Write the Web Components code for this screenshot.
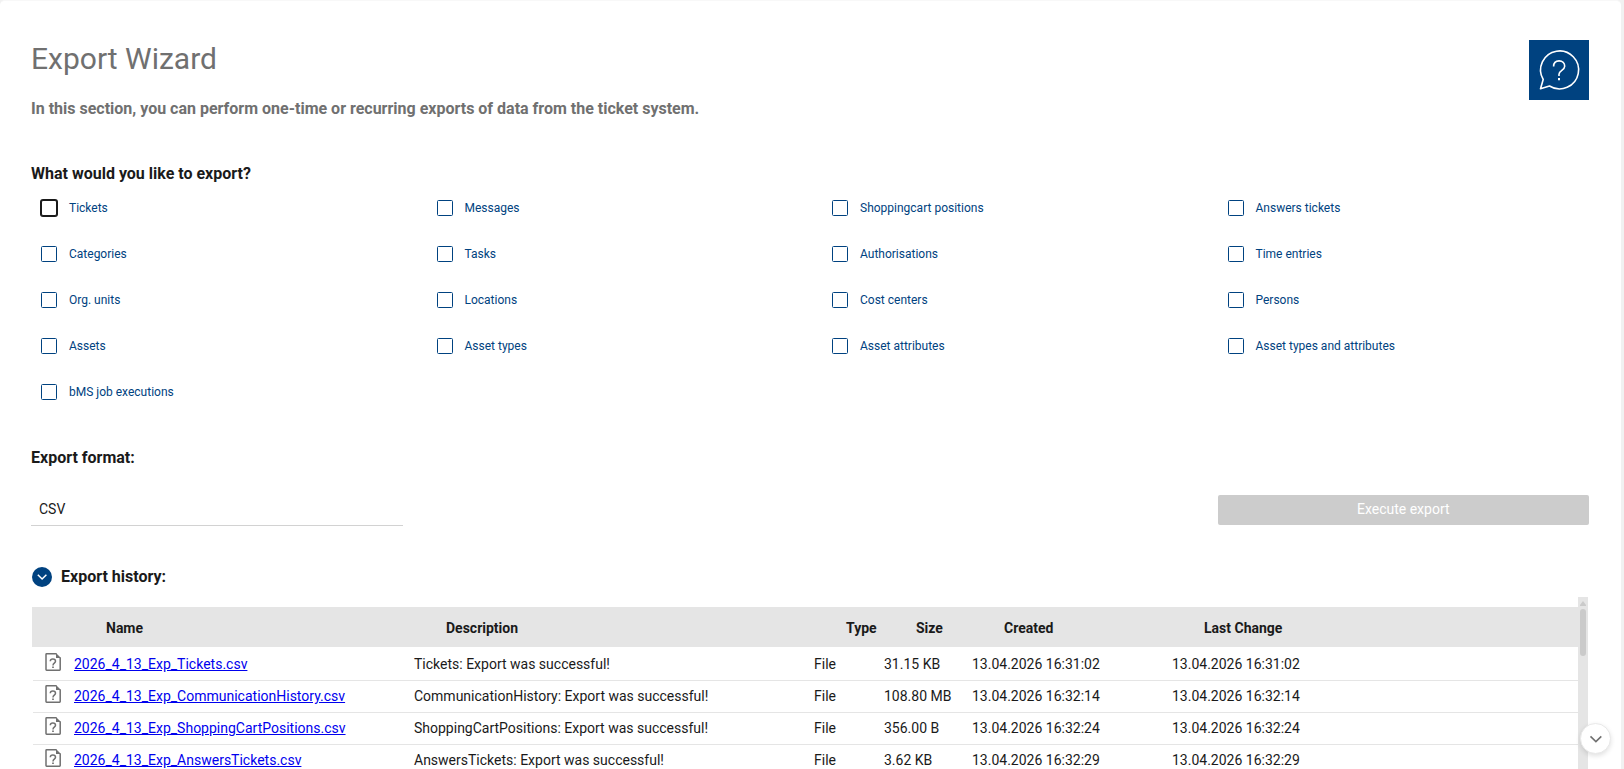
<!DOCTYPE html>
<html lang="en">
<head>
<meta charset="utf-8">
<title>Export Wizard</title>
<style>
html,body{margin:0;height:100%;overflow:hidden}
body{background:#f1f1f1;font-family:Roboto,"Liberation Sans",sans-serif;font-size:14px;color:#1a1a1a}
</style>
</head>
<body>
<export-wizard></export-wizard>
<script>
function define(name, html, init) {
  const template = document.createElement('template');
  template.innerHTML = html;
  customElements.define(name, class extends HTMLElement {
    constructor() {
      super();
      this.attachShadow({ mode: 'open' }).append(template.content.cloneNode(true));
      if (init) init(this.shadowRoot);
    }
  });
}

define('help-button', `
<style>
:host{display:block;width:60px;height:60px;background:#004280}
svg{display:block}
</style>
<svg width="60" height="60" viewBox="0 0 60 60" fill="none" stroke="#fff" stroke-width="1.6">
<path d="M14.2 39.5 A19 19 0 1 1 20.5 46 L11.5 48.7 Z" stroke-linejoin="round"/>
<path d="M24.6 26.6 C24.6 23 26.9 20.9 30.1 20.9 C33.4 20.9 35.7 23.1 35.7 26.3 C35.7 30.2 30 30.5 30 34.2 V36"/>
<path d="M30 38V40.2" stroke-width="2"/>
</svg>`);

define('section-title', `
<style>:host{display:block;font-size:16px;font-weight:700;line-height:24px;color:#1a1a1a}</style>
<slot></slot>`);

define('export-option', `
<style>
:host{display:flex;align-items:center;height:46px;padding-left:10px;gap:12px;font-size:12px;line-height:16px;color:#004280}
i{box-sizing:border-box;width:16px;height:16px;border:1px solid #004280;border-radius:1.5px;background:#fff}
:host([focused]) i{border:1px solid #1a1a1a;border-radius:2px;box-shadow:0 0 0 1px #1a1a1a}
</style>
<i></i><span><slot></slot></span>`);

define('format-select', `
<style>:host{display:block;box-sizing:border-box;height:31px;padding:4px 8px 6px;line-height:20px;border-bottom:1px solid #d2d2d2}</style>
<slot></slot>`);

define('action-button', `
<style>:host{display:block;height:30px;line-height:28px;text-align:center;border-radius:2px;background:#ccc;color:#fff}</style>
<slot></slot>`);

define('history-toggle', `
<style>:host{display:flex;align-items:center;gap:9px;padding-left:1px}svg{display:block}</style>
<svg width="20" height="20" viewBox="0 0 20 20"><circle cx="10" cy="10" r="10" fill="#004280"/><path d="M5.8 7.8 10.1 12l4.3-4.2" fill="none" stroke="#fff" stroke-width="1.5"/></svg>
<section-title><slot></slot></section-title>`);

define('file-icon', `
<style>:host{display:block;width:16px;height:18px}svg{display:block}</style>
<svg width="16" height="18" viewBox="0 0 16 18" fill="none" stroke="#707070">
<path d="M11.5 .8H1.6Q1 .8 1 1.4V16.6Q1 17.2 1.6 17.2H14.6Q15.2 17.2 15.2 16.6V4.6" stroke-width="1.5"/>
<path d="M11 0 16 5H11Z" fill="#707070" stroke="none"/>
<path d="M5.3 8.3C5.3 6.8 6.4 6.1 7.9 6.1S10.5 6.9 10.5 8.3C10.5 10.2 8 10.2 8 12.4" stroke-width="1.5"/>
<path d="M8 13.4V15.1" stroke-width="1.7"/>
</svg>`);

define('history-row', `
<style>
:host{display:grid;box-sizing:border-box;grid-template-columns:29px 340px 400px 70px 88px 200px 1fr;align-items:start;height:32px;margin-left:1px;padding:5px 0 0 12px;border-bottom:1px solid #e5e5e5;line-height:20px;white-space:nowrap}
:host([first]){height:34px;padding-top:7px}
:host(:last-child){border-bottom:0}
a{color:#00e;text-decoration:underline}
file-icon{margin-top:-1px}
</style>
<file-icon></file-icon><a><slot name="name"></slot></a><slot name="description"></slot><slot name="type"></slot><slot name="size"></slot><slot name="created"></slot><slot name="changed"></slot>`);

define('history-head', `
<style>
:host{display:grid;box-sizing:border-box;grid-template-columns:340px 400px 70px 88px 200px 1fr;align-items:start;height:40px;margin-top:10px;padding:11px 0 0 74px;background:#e5e5e5;font-weight:700;line-height:20px}
</style>
<slot></slot>`);

define('scroll-track', `
<style>
:host{display:flex;flex-direction:column;align-items:center;width:10px;background:#e5e5e5}
svg{display:block;margin-top:4px}
b{display:block;width:6px;height:47px;margin-top:3px;border-radius:3px;background:#cacaca}
</style>
<svg width="6" height="5" viewBox="0 0 6 5"><path d="M3 0 6 4V5H0V4Z" fill="#cacaca"/></svg><b></b>`);

define('scroll-down', `
<style>
:host{position:absolute;left:1580px;top:723px;box-sizing:border-box;width:31px;height:31px;border-radius:50%;background:#fff;border:1px solid #e9e9e9;box-shadow:0 2px 5px rgba(0,0,0,.12)}
svg{display:block}
</style>
<svg width="29" height="29" viewBox="0 0 29 29"><path d="M9.5 12.4 14.9 17.6 20.3 12.4" fill="none" stroke="#707070" stroke-width="1.6"/></svg>`);

define('history-table', `
<style>:host{display:flex;padding:0 1px;height:172px}main{flex:1;min-width:0}</style>
<main><history-head><span>Name</span><span>Description</span><span>Type</span><span>Size</span><span>Created</span><span>Last Change</span></history-head></main>
<scroll-track></scroll-track>`, root => {
  [['Tickets', '31.15 KB', '31:02'], ['CommunicationHistory', '108.80 MB', '32:14'],
   ['ShoppingCartPositions', '356.00 B', '32:24'], ['AnswersTickets', '3.62 KB', '32:29']
  ].forEach(([kind, size, time], i) => {
    const row = document.createElement('history-row');
    if (!i) row.setAttribute('first', '');
    const stamp = '13.04.2026 16:' + time;
    const cells = { name: '2026_4_13_Exp_' + kind + '.csv', description: kind + ': Export was successful!', type: 'File', size, created: stamp, changed: stamp };
    for (const key in cells) {
      const cell = document.createElement('span');
      cell.slot = key;
      cell.textContent = cells[key];
      row.append(cell);
    }
    root.querySelector('main').append(row);
  });
});

define('export-wizard', `
<style>
:host{display:block;box-sizing:border-box;position:relative;height:769px;overflow:hidden}
.card{box-sizing:border-box;width:1621px;height:769px;overflow:hidden;padding:0 32px 0 31px;border-top:1px solid #f8f8f8;border-radius:5px 5px 0 0;background:#fff}
header{display:flex;justify-content:space-between;height:161px}
help-button{margin-top:39px}
h1{margin:38px 0 0;font-size:30px;font-weight:400;line-height:40px;color:#707070}
p{margin:18px 0 0;font-size:16px;font-weight:700;line-height:24px;color:#707070}
.grid{display:grid;grid-template-columns:repeat(4,1fr);column-gap:24px}
.options{height:230px;margin-top:-1px}
.format{margin-top:31px}
.form{margin-top:25px}
action-button{grid-column:4}
history-toggle{margin-top:39px}
history-table{margin-top:8px}
</style>
<div class="card">
<header><div><h1>Export Wizard</h1><p>In this section, you can perform one-time or recurring exports of data from the ticket system.</p></div><help-button></help-button></header>
<section-title>What would you like to export?</section-title>
<div class="grid options"></div>
<section-title class="format">Export format:</section-title>
<div class="grid form"><format-select>CSV</format-select><action-button>Execute export</action-button></div>
<history-toggle>Export history:</history-toggle>
<history-table></history-table>
</div>
<scroll-down></scroll-down>`, root => {
  ['Tickets', 'Messages', 'Shoppingcart positions', 'Answers tickets', 'Categories', 'Tasks', 'Authorisations', 'Time entries',
   'Org. units', 'Locations', 'Cost centers', 'Persons', 'Assets', 'Asset types', 'Asset attributes', 'Asset types and attributes',
   'bMS job executions'].forEach((label, i) => {
    const option = document.createElement('export-option');
    option.textContent = label;
    if (!i) option.setAttribute('focused', '');
    root.querySelector('.options').append(option);
  });
});
</script>
</body>
</html>
